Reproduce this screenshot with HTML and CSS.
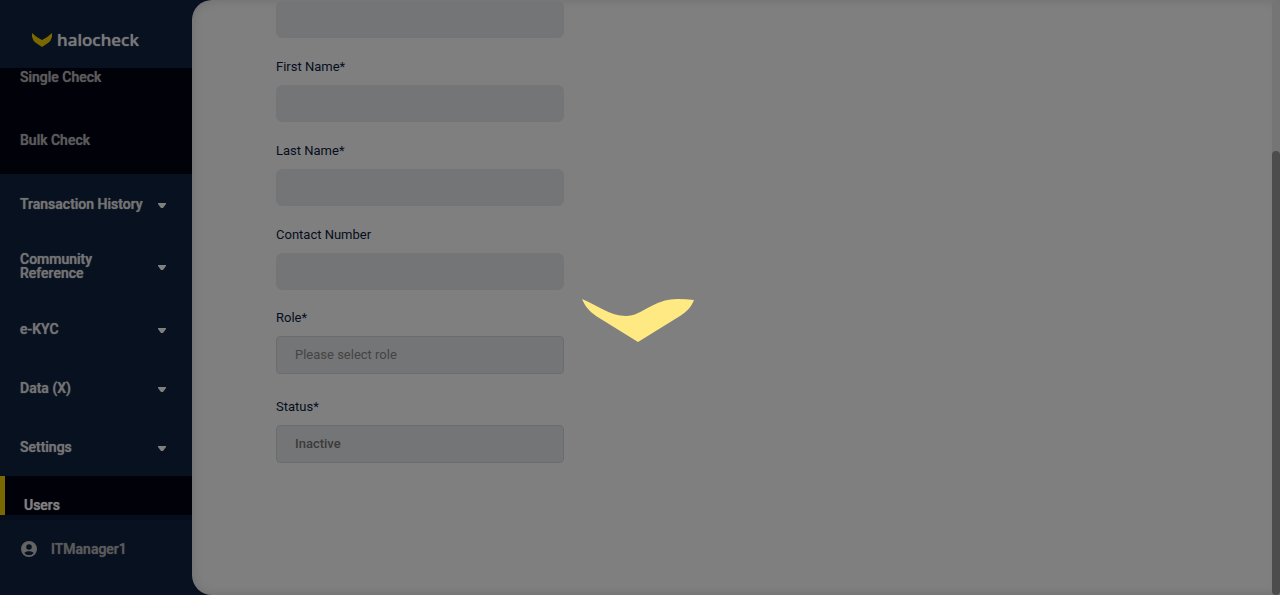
FILE: index.html
```html
<!DOCTYPE html>
<html lang="en">
<head>
<meta charset="utf-8">
<meta name="viewport" content="width=device-width, initial-scale=1">
<title>halocheck - Users</title>
<link rel="stylesheet" href="styles.css">
</head>
<body>
<div class="app">
  <aside class="sidebar">
    <a class="brand" href="#">
      <svg class="brand-mark" viewBox="0 0 20 14" aria-hidden="true"><path d="M0 0 Q4 4 10 7 Q16 4 20 0 V4 Q19 8 16 10 L10 14 L4 10 Q1 8 0 4Z"/></svg>
      <span>halocheck</span>
    </a>
    <nav class="menu" aria-label="Main">
      <div class="submenu">
        <a href="#">Single Check</a>
        <a href="#">Bulk Check</a>
      </div>
      <button class="menu-item" type="button"><span>Transaction History</span><svg class="caret" viewBox="0 0 8 5" aria-hidden="true"><path d="M0 0H8V1L5 5H3L0 1Z"/></svg></button>
      <button class="menu-item menu-item-tall" type="button"><span>Community<br>Reference</span><svg class="caret" viewBox="0 0 8 5" aria-hidden="true"><path d="M0 0H8V1L5 5H3L0 1Z"/></svg></button>
      <button class="menu-item" type="button"><span>e-KYC</span><svg class="caret" viewBox="0 0 8 5" aria-hidden="true"><path d="M0 0H8V1L5 5H3L0 1Z"/></svg></button>
      <button class="menu-item" type="button"><span>Data (X)</span><svg class="caret" viewBox="0 0 8 5" aria-hidden="true"><path d="M0 0H8V1L5 5H3L0 1Z"/></svg></button>
      <button class="menu-item" type="button"><span>Settings</span><svg class="caret" viewBox="0 0 8 5" aria-hidden="true"><path d="M0 0H8V1L5 5H3L0 1Z"/></svg></button>
      <a class="menu-current" href="#" aria-current="page">Users</a>
    </nav>
    <a class="account" href="#">
      <svg class="account-icon" viewBox="0 0 16 16" aria-hidden="true"><path fill-rule="evenodd" d="M8 0a8 8 0 1 0 0 16A8 8 0 0 0 8 0Zm0 3.2a2.8 2.8 0 1 1 0 5.600a2.800 2.800 0 0 1 0-5.600ZM8 14.200a6 6 0 0 1-4.700-2.300C4.300 10.900 6 10.300 8 10.300s3.700.6 4.700 1.600A6 6 0 0 1 8 14.200Z"/></svg>
      <span>ITManager1</span>
    </a>
  </aside>
  <main class="panel">
    <form class="form">
      <div class="group">
        <input class="control" type="text" aria-label="Email">
        <div class="field"><label for="first">First Name*</label><input class="control" id="first" type="text"></div>
        <div class="field"><label for="last">Last Name*</label><input class="control" id="last" type="text"></div>
        <div class="field"><label for="contact">Contact Number</label><input class="control" id="contact" type="tel"></div>
      </div>
      <div class="group group-select">
        <div class="field"><label for="role">Role*</label><select class="control control-select control-empty" id="role"><option>Please select role</option></select></div>
        <div class="field"><label for="status">Status*</label><select class="control control-select" id="status"><option>Inactive</option></select></div>
      </div>
    </form>
    <div class="scroll-track"><div class="scroll-thumb"></div></div>
  </main>
</div>
<div class="loading" role="status" aria-label="Loading">
  <svg class="loading-mark" viewBox="0 0 112 44" aria-hidden="true"><path d="M0 1 C15 7 28 18 44 18 C61 18 70 1 96 1 Q104 1 112 2 C109 10 104 14 98 18 L56 44 L14 18 C7 13 3 8 0 1Z"/></svg>
</div>
</body>
</html>
```
FILE: styles.css
```css
* { box-sizing: border-box; }

body {
  margin: 0;
  background: #0e223e;
  font-family: Roboto, "Liberation Sans", sans-serif;
  font-size: 13px;
}

a { color: inherit; text-decoration: none; }

.app {
  display: grid;
  grid-template-columns: 192px 1fr;
  height: 100vh;
}

.sidebar {
  display: flex;
  flex-direction: column;
  min-height: 0;
  color: #e6e6e6;
  font-size: 14px;
  font-weight: 500;
  line-height: 14px;
  text-shadow: 0 0 1px currentColor;
}

.brand {
  display: flex;
  align-items: center;
  flex: none;
  gap: 5px;
  height: 68px;
  padding: 12px 0 0 32px;
  color: #f0f0f0;
  font-family: "Noto Sans", sans-serif;
  font-size: 17px;
  font-weight: 500;
}

.brand-mark { width: 20px; height: 14px; fill: #f5d000; }

.menu { flex: 1; min-height: 0; overflow: hidden; }

.submenu {
  display: grid;
  gap: 49px;
  padding: 2px 20px 27px;
  background: #000312;
  color: #b4b4b4;
}

.menu-item {
  display: flex;
  align-items: center;
  justify-content: space-between;
  width: 100%;
  padding: 23px 26px 22px 20px;
  border: 0;
  background: none;
  color: inherit;
  font: inherit;
  text-align: left;
  text-shadow: inherit;
}

.menu-item-tall { padding-top: 19px; padding-bottom: 19px; }

.caret { width: 8px; height: 5px; margin-top: 3px; fill: #fff; }

.menu-current {
  display: block;
  padding: 22px 19px;
  border-left: 5px solid #f5d000;
  background: #000312;
  color: #fff;
}

.account {
  display: flex;
  align-items: center;
  flex: none;
  gap: 14px;
  height: 80px;
  padding: 0 21px 18px;
  border-top: 5px solid #0d1d3d;
  color: #b4b4b4;
}

.account-icon { width: 16px; height: 16px; fill: #c8c8c8; }

.panel {
  display: grid;
  grid-template-columns: 1fr 8px;
  min-height: 0;
  overflow: hidden;
  border-radius: 20px 0 0 20px;
  background: #fff;
  box-shadow: inset 0 0 12px rgba(0, 0, 0, 0.14);
}

.form {
  display: grid;
  align-content: start;
  gap: 20px;
  width: 372px;
  padding: 1px 0 0 84px;
}

.group { display: grid; gap: 21px; }

.group-select { gap: 25px; }

.field { display: grid; gap: 10px; }

.field label { color: #0b1b3f; line-height: 16px; }

.control {
  width: 100%;
  height: 37px;
  padding: 0 18px;
  border: 0;
  border-radius: 6px;
  background: #e9ebee;
  font: inherit;
}

.control-select {
  appearance: none;
  height: 38px;
  padding-bottom: 2px;
  border: 1px solid #d6d9de;
  border-radius: 4px;
  color: #777;
  font-weight: 500;
  opacity: 1;
}

.control-empty { color: #888; font-weight: 400; }

.scroll-track {
  padding-top: 151px;
  border-radius: 4px;
  background: #ebebeb;
}

.scroll-thumb { height: 100%; border-radius: 4px; background: #999; }

.loading {
  position: fixed;
  inset: 0;
  display: flex;
  align-items: center;
  justify-content: center;
  padding: 45px 4px 0 0;
  background: rgba(0, 0, 0, 0.5);
}

.loading-mark { width: 112px; height: 44px; fill: #ffe982; }
```
